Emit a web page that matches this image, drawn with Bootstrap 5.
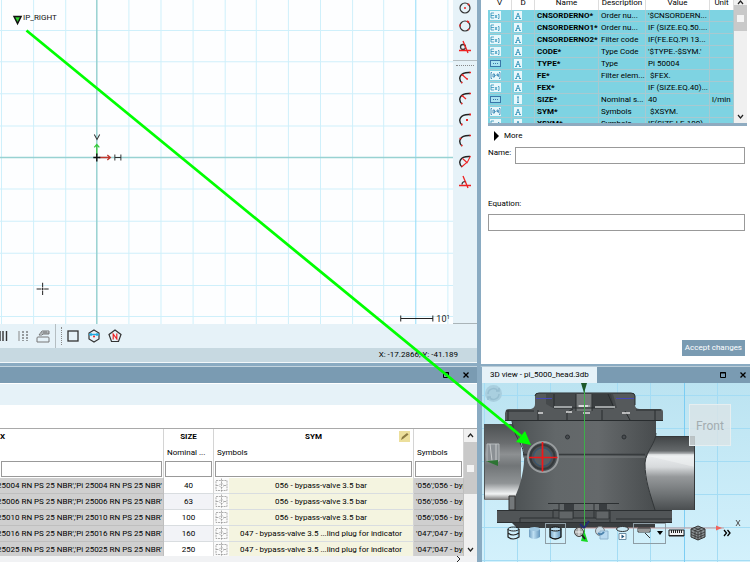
<!DOCTYPE html>
<html lang="en">
<head>
<meta charset="utf-8">
<meta name="viewport" content="width=device-width, initial-scale=1">
<title>3D view - pi_5000_head.3db</title>
<link href="https://cdn.jsdelivr.net/npm/bootstrap@5.3.0/dist/css/bootstrap.min.css" rel="stylesheet">
<style>
:root{--frame:#8aabc2;--bar:#7a9bb2;--pale:#e6f2f8;--status:#c7d9e1}
body{font-family:Roboto,"Open Sans",sans-serif;font-size:8px;line-height:12px;color:#000;background:var(--frame)}
svg{display:block}
button{font:inherit;color:inherit}
.app{height:100vh;display:grid;grid-template-columns:minmax(0,64fr) minmax(0,36fr);grid-template-rows:minmax(0,183fr) minmax(0,98fr)}
.pane{min-width:0;min-height:0;overflow:hidden}
.editor{border-right:3px solid var(--frame);border-bottom:3px solid var(--frame)}
.drawing{background:#fdfeff}
.tools{width:24px;background:var(--pale);border-bottom:1px solid #aab4b8}
.tool{border:0;background:none;padding:0;display:flex;align-items:center;justify-content:center;flex:none}
.tools .tool{height:21px}
.tools .tool:first-child{height:15px}
.rule{border-top:1px solid #b5bec2;height:6px;margin-top:3px;display:flex;justify-content:center;align-items:end;flex:none}
.rule::after{content:"";width:18px;border-top:1px dotted #888}
.shapes{height:24px;background:var(--pale)}
.shapes .tool{width:21px;height:24px}
.shapes .tool:first-child{width:12px;justify-content:start}
.grip{border-left:1px solid #b5bec2;width:7px;height:24px;margin-left:1px;display:flex;justify-content:end;align-items:center}
.grip::after{content:"";height:18px;border-left:1px dotted #888}
.status{height:15px;background:var(--status);padding-right:19px;line-height:14px;border-bottom:1px solid #f3f9fb}
.titlebar{height:17px;background:var(--bar);border-top:1px solid #c2d4df;flex:none}
.titlebar .tool{width:24px;height:16px}
.titlebar .closer{width:15px}
.strip{height:22px;background:var(--pale);border-top:1px solid #fff}
.grid-area{border-top:1px solid #a9a9a9;background:#fff}
.gap-row{height:23px;background:#fff}
table{border-collapse:separate;border-spacing:0;table-layout:fixed;width:100%}
th,td{padding:0;white-space:nowrap;overflow:hidden}
.parts th{height:15px;line-height:15px;text-align:center;font-weight:700;border-right:1px solid #d4d4d4}
.parts .sub th{font-weight:400;text-align:left;padding-left:3px;height:16px}
.parts .filter th{height:18px;padding:1px}
.parts input{display:block;width:100%;height:16px;border:1px solid #999;background:#fff;padding:0 2px}
.parts td{height:16px;line-height:15px;border-bottom:1px solid #d9dde0;border-right:1px solid #d4d4d4;text-align:center}
.parts td.key{background:#cfcfcf;border-color:#bfbfbf}
.parts td.key>div{display:flex;justify-content:end;padding-right:1px}
.parts td.key.text-start{padding-left:2px}
.parts td.pick{background:#f4f4e0}
.parts td.pick>div{display:flex;align-items:center}
.parts td.pick svg{background:#fbfbfb;flex:none}
.parts tr:nth-child(even) td.num{background:#f2f3f7}
.c-key{width:164px}.c-size{width:50px}.c-sym{width:200px}
.edit{background:#ecdf9c;width:11px;height:11px;position:absolute;right:3px;top:2px}
.scroller{width:13px;background:#f0f0f0;flex:none}
.thumb{background:#c9c9c9;height:52px;display:flex;align-items:center;justify-content:center}
.varbox .thumb{height:26px}
.thumb::after{content:"";width:7px;height:7px;background:#f4f4f4}
.hbar{height:6px;background:#f1f2f4}
.props{border-left:1px solid var(--frame);background:#fff;border-bottom:2px solid var(--frame)}
.varbox{height:126px;margin-left:7px;margin-right:3px;border-bottom:3px solid #8fabc0;overflow:hidden;flex:none;background:#7ed3e2}
.vars th{height:10px;line-height:6px;vertical-align:top;background:#fff;text-align:center;font-weight:400;border-right:1px solid #ddd}
.vars td{height:12px;line-height:11px;border-bottom:1px solid #a8c9d0;border-right:1px solid #a8c9d0;padding-left:2px}
.vars td:nth-child(3){font-weight:700}
.v1{width:24px}.v2{width:23px}.v3{width:64px}.v4{width:47px}.v5{width:64px}
.form{padding-left:7px;padding-right:5px}
.form input{height:17px;border:1px solid #999;padding:0 3px;min-width:0;background:#fff}
.eq-label{margin-top:34px}
.name-row{margin-top:5px}
.accept{background:var(--bar);color:#fff;border:0;height:16px;padding:0 3px;line-height:16px}
.view{border-left:2px solid var(--frame);border-top:1px solid #b9ccd8}
.view .titlebar{height:16px;border:0}
.tab{background:var(--pale);width:115px;padding:0 0 0 8px;line-height:16px;border:0;text-align:left}
.viewtools{position:absolute;left:0;right:0;bottom:18px;height:22px;padding-left:21px}
.viewtools .tool{width:21px;height:21px}
.viewtools .boxed{border:1px solid #8e9da5}
.viewtools .wide{width:33px;gap:6px}
.cube{position:absolute;right:19px;top:21px;width:42px;height:42px;background:#dbe3e6cc;border:1px solid #e6eef0;color:#a3acb0;font-size:12px;line-height:42px;text-align:center;padding:0}
.pointer{position:absolute;inset:0;width:100%;height:100%;pointer-events:none}
</style>
</head>
<body>
<svg width="0" height="0" class="position-absolute" aria-hidden="true">
<defs>
<symbol id="exc" viewBox="0 0 11 9"><rect width="11" height="9" fill="#e8f7fb"/><path d="M4 2H1v5h3M1 4.500h3M5 4l2 3M7 4 5 7M8 3.500h1v4H8" fill="none" stroke="#2b8fb8" stroke-width=".8"/></symbol>
<symbol id="box" viewBox="0 0 11 9"><rect x=".5" y="1.500" width="10" height="6" fill="#a9e2f0" stroke="#3a76a8"/><path d="M3 4.500h5" stroke="#3a76a8" stroke-dasharray="1 1"/></symbol>
<symbol id="rng" viewBox="0 0 11 9"><rect width="11" height="9" fill="#e8f7fb"/><path d="M2 1.500H1v6h1M9 1.500h1v6H9M3 3h1.500v3H3zM5.200 4.500h1M8.300 6V3H7v1.500h1.300" fill="none" stroke="#2b7fb0" stroke-width=".8"/></symbol>
<symbol id="alp" viewBox="0 0 8 9"><rect width="8" height="9" fill="#e8f7fb"/><path d="M1 7.500h2M5 7.500h2M2 7.500 4 2l2 5.500M2.800 5.500h2.400" fill="none" stroke="#2b8fb8" stroke-width=".8"/></symbol>
<symbol id="int" viewBox="0 0 8 9"><rect width="8" height="9" fill="#e8f7fb"/><path d="M3 2h2M4 2v5.500M3 7.500h2" fill="none" stroke="#2b8fb8" stroke-width=".9"/></symbol>
<symbol id="valve" viewBox="0 0 15 14"><path d="M2 2h11v10H2zM7.500 0v14M7.500 4.500 10 7l-2.500 2.500L5 7zM2 7h3M10 7h3" fill="none" stroke="#999" stroke-width=".8" stroke-dasharray="2 .8"/></symbol>
<symbol id="max" viewBox="0 0 8 8"><path d="M1.500 1.500h5v5h-5zM1 2h6" fill="none" stroke="#000"/></symbol>
<symbol id="cls" viewBox="0 0 8 8"><path d="m1.500 1.500 5 5M6.500 1.500l-5 5" stroke="#000" stroke-width="1.300"/></symbol>
<symbol id="up" viewBox="0 0 7 5"><path d="m1 4 2.500-3L6 4" fill="none" stroke="#222" stroke-width="1.200"/></symbol>
<symbol id="dn" viewBox="0 0 7 5"><path d="m1 1 2.500 3L6 1" fill="none" stroke="#222" stroke-width="1.200"/></symbol>
</defs>
</svg>
<main class="app position-relative">
<section class="pane editor d-flex flex-column">
 <div class="d-flex flex-grow-1 overflow-hidden">
  <div class="drawing flex-grow-1 overflow-hidden">
  <svg width="100%" height="100%" viewBox="0 0 453 323" preserveAspectRatio="xMinYMin slice" role="img" aria-label="Drawing plane">
   <path d="M1.500 0v323M33.500 0v323M65.500 0v323M128.500 0v323M160.500 0v323M192.500 0v323M224.500 0v323M255.500 0v323M287.500 0v323M319.500 0v323M351.500 0v323M382.500 0v323M446.500 0v323M0 30.500h453M0 61.500h453M0 93.500h453M0 125.500h453M0 188.500h453M0 220.500h453M0 252.500h453M0 284.500h453M0 315.500h453" stroke="#cff0fb" stroke-width="1"/>
   <path d="M414.500 0v323" stroke="#93dcf8"/>
   <path d="M96.500 0v323M0 157h453" stroke="#98d2d2" stroke-width="1.500"/>
   <path d="M14 16.500h7l-3.500 7z" fill="#32c832" stroke="#111" stroke-width="1.500"/><path d="M16 18.500h3" stroke="#2fdc2f"/>
   <text x="23" y="20" font-size="8" fill="#111">IP_RIGHT</text>
   <path d="M96.500 155v-11M94 147l2.500-3 2.500 3" stroke="#35c93c" fill="none" stroke-width="1.300"/>
   <path d="M99 157h11M107 154.500l3 2.500-3 2.500" stroke="#c0372d" fill="none" stroke-width="1.300"/>
   <path d="M96.500 153v8M93 157h7" stroke="#111" stroke-width="1.400"/>
   <path d="m94 134 2.700 5 2.700-5M114.500 154v6M120.500 154v6M114.500 157h6" stroke="#333" fill="none"/>
   <path d="M42.500 282v4.500M42.500 289.500v4.500M36.500 288h4.500M44 288h4.500M41.500 288h2M42.500 287v2" stroke="#222"/>
   <path d="M399.500 314.500v6M431.500 314.500v6M399.500 317.500h32" stroke="#222" fill="none"/>
   <text x="435" y="321" font-size="9" fill="#222">10<tspan dy="-3" font-size="6">1</tspan></text>
  </svg>
  </div>
  <div class="tools d-flex flex-column align-items-stretch flex-shrink-0">
   <button class="tool" aria-label="Circle by centre"><svg width="14" height="14"><circle cx="7" cy="7" r="5" fill="none" stroke="#333" stroke-width="1.200"/><circle cx="7" cy="7" r="1" fill="#e22"/><circle cx="10.500" cy="3.500" r="1" fill="#e22"/></svg></button>
   <button class="tool" aria-label="Circle by points"><svg width="14" height="14"><circle cx="7" cy="7" r="5" fill="none" stroke="#333" stroke-width="1.200"/><path d="M2 5.500v2M9 2l2 1.500M11 10l-1 1" stroke="#e22" stroke-width="1.600"/></svg></button>
   <button class="tool" aria-label="Tangent circle"><svg width="14" height="14"><circle cx="5" cy="7" r="2.500" fill="none" stroke="#333" stroke-width="1.300"/><path d="M1 10.500h12M5 1l5 12" stroke="#e22" stroke-width="1.300"/></svg></button>
   <div class="rule"></div>
   <button class="tool" aria-label="Arc by radius"><svg width="14" height="14"><path d="M4 13C0 9 1 2 12 2.500" fill="none" stroke="#222" stroke-width="1.400"/><path d="m4.500 5 4.500 4" stroke="#e22" stroke-width="1.200"/><path d="M11.500 2.500h1.500M3 12.500h1.500M3.500 5h2M8.500 9H10" stroke="#e22" stroke-width="1.600"/></svg></button>
   <button class="tool" aria-label="Arc by diameter"><svg width="14" height="14"><path d="M4 13C0 9 1 2 12 2.500" fill="none" stroke="#222" stroke-width="1.400"/><path d="m4.500 5 3.500 3" stroke="#e22" stroke-width="1.200"/><path d="M11.500 2.500h1.500M3 12.500h1.500M3.500 5h2" stroke="#e22" stroke-width="1.600"/></svg></button>
   <button class="tool" aria-label="Arc by centre"><svg width="14" height="14"><path d="M4 13C0 9 1 2 12 2.500" fill="none" stroke="#222" stroke-width="1.400"/><path d="M11.500 2.500h1.500M3 12.500h1.500M8 8h2" stroke="#e22" stroke-width="1.800"/></svg></button>
   <button class="tool" aria-label="Arc by points"><svg width="14" height="14"><path d="M4 13C0 9 1 2 12 2.500" fill="none" stroke="#222" stroke-width="1.400"/><path d="M11.500 2.500h1.500M3 12.500h1.500M1.500 5.500h2" stroke="#e22" stroke-width="1.600"/></svg></button>
   <button class="tool" aria-label="Arc by angle"><svg width="14" height="14"><path d="M4 13C0 9 1 2 12 2.500" fill="none" stroke="#222" stroke-width="1.400"/><path d="m12.500 2-3 6-6 5M4.500 4.500l5 4.500" fill="none" stroke="#e22" stroke-width="1.100"/></svg></button>
   <button class="tool" aria-label="Tangent arc"><svg width="14" height="14"><path d="M4 9.500C4 7 6 6 8 7" fill="none" stroke="#333" stroke-width="1.300"/><path d="M1 10.500h12M5 1l5 12" stroke="#e22" stroke-width="1.300"/></svg></button>
  </div>
 </div>
 <div class="shapes d-flex flex-shrink-0">
  <button class="tool" aria-label="Solid hatch"><svg width="8" height="12"><path d="M0 1v10M3 1v10M6.500 1v10" stroke="#333" stroke-width="1.400"/></svg></button>
  <button class="tool" aria-label="Dashed lines"><svg width="12" height="12"><path d="M2 1v10" stroke="#888"/><path d="M6 1v10M10 1v10" stroke="#444" stroke-dasharray="2 1"/></svg></button>
  <button class="tool" aria-label="Stack"><svg width="15" height="14"><path d="M1 13V9q0-1 1-1h10q1 0 1 1v4zM3 6l3-4h7v3H7l-1 1H3M5 4h8M8 2v2M10 2v2" fill="none" stroke="#777"/></svg></button>
  <div class="grip"></div>
  <button class="tool" aria-label="Rectangle"><svg width="12" height="12"><rect x="1" y="1" width="10" height="10" fill="none" stroke="#333" stroke-width="1.300"/></svg></button>
  <button class="tool" aria-label="Hexagon"><svg width="14" height="14"><path d="M7 1l5 3v6l-5 3-5-3V4z" fill="none" stroke="#333" stroke-width="1.200"/><path d="M2 5.500h10M4 4v3M10 4v3" stroke="#22aadf" stroke-width="1.300"/><circle cx="7" cy="7.500" r="1" fill="#e22"/></svg></button>
  <button class="tool" aria-label="Polygon"><svg width="14" height="14"><path d="M7 1 13 5.500 10.500 12.500H3.500L1 5.500z" fill="none" stroke="#333" stroke-width="1.200"/><path d="M5.200 10.500V5l3.600 5V4.500" fill="none" stroke="#e22" stroke-width="1.200"/></svg></button>
 </div>
 <div class="status text-end flex-shrink-0">X: -17.2866, Y: -41.189</div>
</section>

<section class="pane props d-flex flex-column">
 <div class="varbox d-flex">
  <div class="flex-grow-1 overflow-hidden">
  <table class="vars">
   <colgroup><col class="v1"><col class="v2"><col class="v3"><col class="v4"><col class="v5"><col></colgroup>
   <thead><tr><th>V</th><th>D</th><th>Name</th><th>Description</th><th>Value</th><th>Unit</th></tr></thead>
   <tbody>
   <tr><td><svg width="11" height="9"><use href="#exc"/></svg></td><td><svg width="8" height="9"><use href="#alp"/></svg></td><td>CNSORDERNO*</td><td>Order nu...</td><td>'$CNSORDERN...</td><td></td></tr>
   <tr><td><svg width="11" height="9"><use href="#exc"/></svg></td><td><svg width="8" height="9"><use href="#alp"/></svg></td><td>CNSORDERNO1*</td><td>Order nu...</td><td>IF (SIZE.EQ.50....</td><td></td></tr>
   <tr><td><svg width="11" height="9"><use href="#exc"/></svg></td><td><svg width="8" height="9"><use href="#alp"/></svg></td><td>CNSORDERNO2*</td><td>Filter code</td><td>IF(FE.EQ.'Pi 13...</td><td></td></tr>
   <tr><td><svg width="11" height="9"><use href="#exc"/></svg></td><td><svg width="8" height="9"><use href="#alp"/></svg></td><td>CODE*</td><td>Type Code</td><td>'$TYPE.-$SYM.'</td><td></td></tr>
   <tr><td><svg width="11" height="9"><use href="#box"/></svg></td><td><svg width="8" height="9"><use href="#alp"/></svg></td><td>TYPE*</td><td>Type</td><td>Pi 50004</td><td></td></tr>
   <tr><td><svg width="11" height="9"><use href="#rng"/></svg></td><td><svg width="8" height="9"><use href="#alp"/></svg></td><td>FE*</td><td>Filter elem...</td><td>&nbsp;$FEX.</td><td></td></tr>
   <tr><td><svg width="11" height="9"><use href="#exc"/></svg></td><td><svg width="8" height="9"><use href="#alp"/></svg></td><td>FEX*</td><td></td><td>IF (SIZE.EQ.40)...</td><td></td></tr>
   <tr><td><svg width="11" height="9"><use href="#box"/></svg></td><td><svg width="8" height="9"><use href="#int"/></svg></td><td>SIZE*</td><td>Nominal s...</td><td>40</td><td>l/min</td></tr>
   <tr><td><svg width="11" height="9"><use href="#rng"/></svg></td><td><svg width="8" height="9"><use href="#alp"/></svg></td><td>SYM*</td><td>Symbols</td><td>&nbsp;$XSYM.</td><td></td></tr>
   <tr><td><svg width="11" height="9"><use href="#exc"/></svg></td><td><svg width="8" height="9"><use href="#alp"/></svg></td><td>XSYM*</td><td>Symbols</td><td>IF(SIZE.LE.100)...</td><td></td></tr>
   </tbody>
  </table>
  </div>
  <div class="scroller d-flex flex-column align-items-center">
   <svg width="7" height="5"><use href="#up"/></svg><div class="thumb w-100"></div><svg class="mt-auto mb-1" width="7" height="5"><use href="#dn"/></svg>
  </div>
 </div>
 <form class="form d-flex flex-column flex-grow-1">
  <button type="button" class="tool align-self-start gap-1 mt-1 ms-1"><svg width="8" height="10"><path d="M2 0l5 5-5 5z" fill="#000"/></svg>More</button>
  <div class="name-row d-flex gap-1"><label for="nm">Name:</label><input id="nm" class="flex-grow-1"></div>
  <label for="eq" class="eq-label">Equation:</label>
  <input id="eq" class="w-100 mt-1">
  <button type="button" class="accept align-self-end mt-auto mb-2">Accept changes</button>
 </form>
</section>

<section class="pane editor d-flex flex-column border-bottom-0">
 <div class="titlebar d-flex justify-content-end align-items-center">
  <button class="tool" aria-label="Maximise table"><svg width="8" height="8"><use href="#max"/></svg></button>
  <button class="tool closer me-1" aria-label="Close table"><svg width="8" height="8"><use href="#cls"/></svg></button>
 </div>
 <div class="strip flex-shrink-0"></div>
 <div class="gap-row flex-shrink-0"></div>
 <div class="grid-area d-flex flex-grow-1 overflow-hidden">
  <div class="flex-grow-1 overflow-hidden">
  <table class="parts">
   <colgroup><col class="c-key"><col class="c-size"><col class="c-sym"><col></colgroup>
   <thead>
   <tr><th class="text-start">X</th><th>SIZE</th><th class="position-relative">SYM<svg class="edit" viewBox="0 0 11 11"><path d="M2 9l1-3 5-4 1.500 1.500-5 4z" fill="#8c7b42"/></svg></th><th></th></tr>
   <tr class="sub"><th></th><th>Nominal ...</th><th>Symbols</th><th>Symbols</th></tr>
   <tr class="filter"><th><input aria-label="Filter X"></th><th><input aria-label="Filter size"></th><th><input aria-label="Filter symbol"></th><th><input aria-label="Filter symbols"></th></tr>
   </thead>
   <tbody>
   <tr><td class="key"><div>25004 RN PS 25 NBR','Pi 25004 RN PS 25 NBR'</div></td><td class="num">40</td><td class="pick"><div><svg width="15" height="15"><use href="#valve"/></svg><span class="flex-grow-1">056 - bypass-valve 3.5 bar</span></div></td><td class="key text-start">'056','056 - bypass-valve</td></tr>
   <tr><td class="key"><div>25006 RN PS 25 NBR','Pi 25006 RN PS 25 NBR'</div></td><td class="num">63</td><td class="pick"><div><svg width="15" height="15"><use href="#valve"/></svg><span class="flex-grow-1">056 - bypass-valve 3.5 bar</span></div></td><td class="key text-start">'056','056 - bypass-valve</td></tr>
   <tr><td class="key"><div>25010 RN PS 25 NBR','Pi 25010 RN PS 25 NBR'</div></td><td class="num">100</td><td class="pick"><div><svg width="15" height="15"><use href="#valve"/></svg><span class="flex-grow-1">056 - bypass-valve 3.5 bar</span></div></td><td class="key text-start">'056','056 - bypass-valve</td></tr>
   <tr><td class="key"><div>25016 RN PS 25 NBR','Pi 25016 RN PS 25 NBR'</div></td><td class="num">160</td><td class="pick"><div><svg width="15" height="15"><use href="#valve"/></svg><span class="flex-grow-1">047 - bypass-valve 3.5 ...lind plug for indicator</span></div></td><td class="key text-start">'047','047 - bypass-valve</td></tr>
   <tr><td class="key"><div>25025 RN PS 25 NBR','Pi 25025 RN PS 25 NBR'</div></td><td class="num">250</td><td class="pick"><div><svg width="15" height="15"><use href="#valve"/></svg><span class="flex-grow-1">047 - bypass-valve 3.5 ...lind plug for indicator</span></div></td><td class="key text-start">'047','047 - bypass-valve</td></tr>
   </tbody>
  </table>
  </div>
  <div class="scroller d-flex flex-column align-items-center">
   <svg class="my-1" width="7" height="5"><use href="#up"/></svg><div class="thumb w-100"></div><svg class="mt-auto mb-1" width="7" height="5"><use href="#dn"/></svg>
  </div>
 </div>
 <div class="hbar d-flex justify-content-end pe-3 flex-shrink-0"><svg width="5" height="6"><path d="M1 0l3 3-3 3" fill="none" stroke="#222"/></svg></div>
</section>

<section class="pane view d-flex flex-column">
 <div class="titlebar d-flex">
  <button class="tab me-auto text-nowrap">3D view - pi_5000_head.3db</button>
  <button class="tool" aria-label="Maximise view"><svg width="8" height="8"><use href="#max"/></svg></button>
  <button class="tool closer" aria-label="Close view"><svg width="8" height="8"><use href="#cls"/></svg></button>
 </div>
 <div class="position-relative flex-grow-1 overflow-hidden">
 <svg width="100%" height="100%" viewBox="482 383 268 179" preserveAspectRatio="xMinYMin slice" role="img" aria-label="Filter head model, front view">
  <defs>
   <linearGradient id="sky" x2="0" y2="1"><stop stop-color="#bbe3f1"/><stop offset="1" stop-color="#d3f1fc"/></linearGradient>
   <linearGradient id="metal"><stop stop-color="#4c5153"/><stop offset=".3" stop-color="#626769"/><stop offset=".6" stop-color="#65696b"/><stop offset="1" stop-color="#484c4e"/></linearGradient>
   <linearGradient id="lport" x2="0" y2="1"><stop stop-color="#4d5153"/><stop offset=".25" stop-color="#6a6d6f"/><stop offset=".4" stop-color="#8d9092"/><stop offset=".55" stop-color="#717577"/><stop offset=".78" stop-color="#909496"/><stop offset=".92" stop-color="#f2f4f5"/><stop offset="1" stop-color="#777"/></linearGradient>
   <linearGradient id="rport" x2="0" y2="1"><stop stop-color="#3f4345"/><stop offset=".2" stop-color="#65696b"/><stop offset=".27" stop-color="#e9ecee"/><stop offset=".42" stop-color="#d7dadc"/><stop offset=".55" stop-color="#96999b"/><stop offset=".8" stop-color="#6d7173"/><stop offset="1" stop-color="#4a4e50"/></linearGradient>
   <linearGradient id="cyl"><stop stop-color="#6e9dc0"/><stop offset=".4" stop-color="#bfe0f3"/><stop offset="1" stop-color="#6395bb"/></linearGradient>
  </defs>
  <rect x="482" y="383" width="268" height="179" fill="url(#sky)"/>
  <path d="M484.500 383v179M517.500 383v179M550.500 383v179M617.500 383v179M650.500 383v179M717.500 383v179M482 395.500h268M482 428.500h268M482 461.500h268M482 494.500h268M482 527.500h268M482 560.500h268" stroke="#a4dcf4"/>
  <path d="M684.500 383v179" stroke="#7ccdf3"/>
  <circle cx="493.500" cy="393.500" r="8.500" fill="#a9cfdf"/><path d="M488 394a5.500 5.500 0 0 1 10-3M499 394a5.500 5.500 0 0 1-10 3M496 391h3v-3M491 397h-3v3" fill="none" stroke="#97bfd1" stroke-width="1.500"/>
  <path d="M484 424h37v76h-37z" fill="url(#lport)"/><path d="M484.500 424v75" stroke="#4f5557"/>
  <path d="M487 444h12v17h-12z" fill="#8b9094" stroke="#b3b8ba"/><path d="m490 444 2 17M496 444v17" stroke="#c8cbcc"/>
  <path d="M486 461l12-1v6z" fill="#2d7433"/>
  <path d="M644 436h51v74h-51z" fill="url(#rport)"/><path d="m648 456 47 11v-13h-47z" fill="#f4f6f7" opacity=".45"/><path d="M694.500 436v74M645 436.500h50" stroke="#35393b"/>
  <path d="M512 421h144v12c0 10-10 18-11 30-1 17 5 30 10 47H514v-11c7-14 11-32 10-46-2-14-9-18-12-32z" fill="url(#metal)"/>
  <path d="M512 421c3 20 11 20 12 36M656 433c0 10-10 18-11 30M645 463c0 18 5 30 10 47" fill="none" stroke="#323638"/>
  <path d="M523 454.500h122" stroke="#373b3d" stroke-width="1.500"/><path d="M523 457h122" stroke="#787c7e"/>
  <path d="M506 410q1-1 3-1h22q4-1 4-5v-8q0-3 4-3h92q4 0 4 3v9q0 4 5 4h20q3 0 3 3v9H505v-8z" fill="#55595b"/>
  <path d="M554 394h-8v10l7 4h64l-4-14z" fill="#45494b"/>
  <path d="M576 394h16v17h-16z" fill="#747879"/>
  <path d="M593 394h18l3 14h-21z" fill="#3b3f41"/>
  <path d="M535 396q0-3 4-3h92q4 0 4 3v9M554 394v14h60l-6-14M576 394v17M592 394v17M505 420.500h158M506 411h28M636 410h25M508 410v11M538 410v11M567 421v-8q3-3 6-4M602 421v-11M630 420l-5-9M655 410v11" fill="none" stroke="#282c2e"/>
  <path d="M554 407h18M578 406h12M595 407h20" stroke="#9ea2a3" stroke-width="2"/><path d="M579 406h9M566 412h6M622 413h8M538 413h5M583 413h7" stroke="#fff" stroke-width="2" opacity=".6"/>
  <path d="M536 398.500h16M616 398.500h18" stroke="#4548b5"/>
  <circle cx="567.500" cy="437" r="2" fill="#484c50" stroke="#2c3033"/><circle cx="624" cy="437" r="2" fill="#484c50" stroke="#2c3033"/>
  <path d="M509 496h6v14h-6z" fill="#74787a" stroke="#333"/>
  <path d="M497 510h175v13H497z" fill="#515557"/><path d="M512 523h143v5H517z" fill="#3a3e40"/>
  <path d="M497 510.500h175M497 522.500h175M548 503.500h71M520 522v-4h90v4M553 518v-8h6v-7M573 518v-15M594 518v-15M610 518v-8h-6v-7M616 519h56" fill="none" stroke="#2c3032"/>
  <path d="M564 504h10v6h-10zM599 504h8v6h-8z" fill="#393d40"/><path d="M559 511h14v8h-14zM596 511h13v8h-13z" fill="#616567" stroke="#34383a"/>
  <path d="M584.500 388v144" stroke="#3eae4a"/><path d="M581 383h6l-3 10z" fill="#1c5728"/>
  <path d="M582 528h142" stroke="#c79c9c"/><path d="M716 525.500l6 2.500-6 2.500z" fill="#f0655d"/>
  <path d="m736 520 4 6M740 520l-4 6" stroke="#555"/>
  <circle cx="543" cy="457" r="15" fill="#4c5154" stroke="#999d9f" stroke-width="2"/><circle cx="542.500" cy="457" r="12" fill="none" stroke="#353a3d" stroke-width="2"/><circle cx="542.500" cy="457" r="9" fill="#596063" stroke="#315779"/>
  <path d="M542.500 442v29.500M529 457.500h28.500" stroke="#f01818" stroke-width="1.700"/>
  <path d="m584 528-4-4M584 528l5-7" stroke="#232e72" stroke-width="2"/><path d="M581 541l3-11 4 12z" fill="#16d923"/>
 </svg>
 <button class="cube">Front</button>
 <div class="viewtools d-flex align-items-center">
  <button class="tool" aria-label="Wireframe"><svg width="15" height="16"><path d="M2 4v8q5 4 11 0V4M2 8q5 4 11 0" fill="none" stroke="#222" stroke-width="1.200"/><ellipse cx="7.500" cy="4" rx="5.500" ry="2" fill="none" stroke="#222"/></svg></button>
  <button class="tool" aria-label="Shaded"><svg width="15" height="16"><path d="M2 4v8q5 4 11 0V4z" fill="url(#cyl)"/><ellipse cx="7.500" cy="4" rx="5.500" ry="2" fill="#9fc7e0"/></svg></button>
  <button class="tool boxed" aria-label="Shaded with edges"><svg width="15" height="16"><path d="M2 4v8q5 4 11 0V4z" fill="url(#cyl)" stroke="#111" stroke-width="1.300"/><ellipse cx="7.500" cy="4" rx="5.500" ry="2" fill="#bddff1" stroke="#111"/></svg></button>
  <button class="tool ms-1" aria-label="Zoom to model"><svg width="15" height="16"><circle cx="6" cy="7" r="4.500" fill="#aaa" stroke="#444"/><path d="M2 7h8M6 3v8" stroke="#eee"/><path d="m9 10 3 4" stroke="#222" stroke-width="2"/></svg></button>
  <button class="tool" aria-label="Transparency"><svg width="15" height="16"><circle cx="6" cy="6" r="4.500" fill="#c9dbe6" stroke="#777"/><path d="M6 6h8v8H6z" fill="#b9daf0" stroke="#8fb4ce"/><path d="M4 8q3 3 6-1" stroke="#4c83ad" stroke-width="2" fill="none"/></svg></button>
  <button class="tool" aria-label="Animate"><svg width="15" height="16"><ellipse cx="7.500" cy="4" rx="6" ry="2.500" fill="#c8e7f3" stroke="#333"/><path d="M4 8.500h7v6H4z" fill="#fff" stroke="#6b8ea5"/><path d="M6.500 9.500v4l3-2z" fill="#23557a"/></svg></button>
  <button class="tool boxed wide" aria-label="Dimensions"><svg width="14" height="16"><path d="M1 3h12v4H1z" fill="#fff" stroke="#333"/><path d="M3 3v3M5 3v3M7 3v3M9 3v3M11 3v3M8 8l5 5" stroke="#333"/></svg><svg width="6" height="4"><path d="M0 0h6L3 4z" fill="#000"/></svg></button>
  <button class="tool" aria-label="Measure"><svg width="17" height="10"><path d="M1 2h15v6H1z" fill="#f2f2f2" stroke="#222"/><path d="M3.500 2v3M5.500 2v3M7.500 2v3M9.500 2v3M11.500 2v3M13.500 2v3M1 7.500h15" stroke="#222"/></svg></button>
  <button class="tool" aria-label="Section"><svg width="16" height="16"><path d="m8 1 7 3v8l-7 3-7-3V4z" fill="#8b9194" stroke="#333"/><path d="m1 4 7 3 7-3M8 7v8M1 7l7 3 7-3M1 9.500l7 3 7-3M4 2.500l7 3v8M12 2.500 5 5.500v8" fill="none" stroke="#333" stroke-width=".8"/></svg></button>
  <button class="tool ms-2" aria-label="More tools"><svg width="8" height="8"><path d="m1 1 2.500 3L1 7M4.500 1 7 4 4.500 7" fill="none" stroke="#000" stroke-width="1.300"/></svg></button>
 </div>
 </div>
</section>
<svg class="pointer" viewBox="0 0 750 562" preserveAspectRatio="none" aria-hidden="true"><path d="M26.500 30.500 521 436" stroke="#0f0" stroke-width="2.800"/><path d="m531 445-15-3 9-11z" fill="#0f0"/></svg>
</main>
<script src="https://cdn.jsdelivr.net/npm/bootstrap@5.3.0/dist/js/bootstrap.bundle.min.js"></script>
</body>
</html>
